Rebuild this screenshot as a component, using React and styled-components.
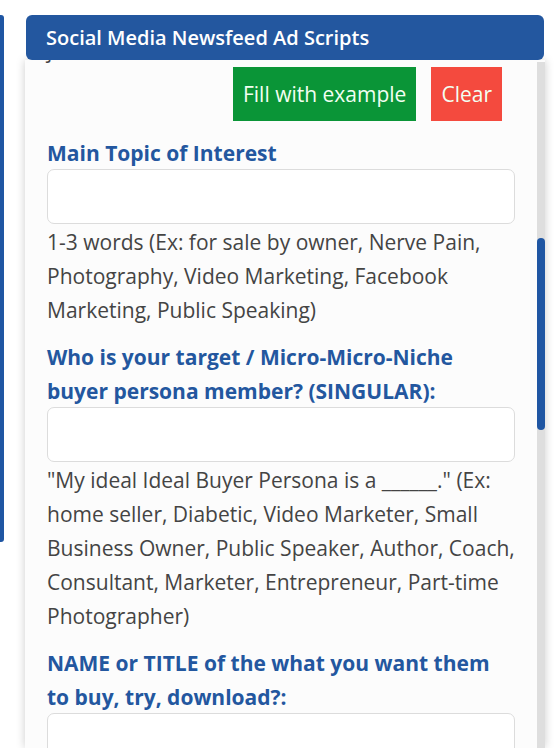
import React, { useLayoutEffect, useRef } from 'react';
import styled, { createGlobalStyle } from 'styled-components';

const GlobalStyle = createGlobalStyle`
  html, body { margin: 0; padding: 0; background: #ffffff; overflow: hidden; }
  * { box-sizing: border-box; }
`;

const Page = styled.div`
  display: flex;
  align-items: flex-start;
  height: 748px;
  font-family: "Open Sans", "Noto Sans", sans-serif;
`;

// the edge of the neighbouring panel, cut off by the window
const SideEdge = styled.div`
  width: 4px;
  height: 527px;
  margin-top: 15px;
  background: #1f56a3;
  border-radius: 0 3px 3px 0;
`;

const Panel = styled.section`
  position: relative;
  display: flex;
  flex-direction: column;
  width: 520px;
  height: 733px;
  margin-left: 21px;
  margin-top: 15px;
`;

const Header = styled.h2`
  flex: none;
  margin: 0 1px;
  height: 45px;
  display: flex;
  align-items: center;
  padding: 0 20px;
  background: #23579f;
  color: #fff;
  border-radius: 6px;
  font-size: 20px;
  font-weight: 600;
  position: relative;
  z-index: 1;
`;

const Body = styled.div`
  flex: 1;
  overflow: hidden;
  position: relative;
  background: #fcfcfc;
  box-shadow: 0 0 9px rgba(0, 0, 0, 0.2);
  padding: 0 30px 0 22px;
`;

const ScrollTrack = styled.div`
  position: absolute;
  right: 0;
  top: 47px;
  bottom: 0;
  width: 8px;
  background: #dedede;
  z-index: 2;
`;

const ScrollThumb = styled.div`
  width: 8px;
  height: 192px;
  margin-top: 176px;
  border-radius: 4px;
  background: #1f56a3;
`;

const Para = styled.p`
  margin: 0;
  font-size: 21px;
  line-height: 34px;
  color: #444;
`;

const ButtonRow = styled.div`
  display: flex;
  justify-content: flex-end;
  gap: 15px;
  padding-right: 13px;
`;

const Button = styled.button`
  height: 54px;
  padding: 0 10px;
  border: none;
  border-radius: 0;
  font-family: inherit;
  font-size: 21px;
  color: #f2fff2;
  background: ${p => (p.$tone === 'danger' ? '#f44a3e' : '#0a9537')};
  cursor: pointer;
`;

const Field = styled.div`
  display: flex;
  flex-direction: column;
  margin-top: ${p => (p.$first ? '15px' : '13px')};
`;

const Label = styled.label`
  font-size: 21px;
  font-weight: 700;
  line-height: 34px;
  color: #23579f;
`;

const Input = styled.input`
  height: 55px;
  width: 100%;
  margin-top: -1px;
  border: 1px solid #dcdcdc;
  border-radius: 7px;
  background: #fff;
  font-family: inherit;
  font-size: 18px;
  padding: 0 12px;
  outline: none;
`;

const Help = styled.div`
  font-size: 21px;
  line-height: 34px;
  color: #444;
  margin-top: 1px;
`;

const fields = [
  {
    label: 'Main Topic of Interest',
    help: '1-3 words (Ex: for sale by owner, Nerve Pain, Photography, Video Marketing, Facebook Marketing, Public Speaking)',
  },
  {
    label: 'Who is your target / Micro-Micro-Niche buyer persona member? (SINGULAR):',
    help: '"My ideal Ideal Buyer Persona is a ______." (Ex: home seller, Diabetic, Video Marketer, Small Business Owner, Public Speaker, Author, Coach, Consultant, Marketer, Entrepreneur, Part-time Photographer)',
  },
  {
    label: 'NAME or TITLE of the what you want them to buy, try, download?:',
    help: '(Ex: Free Report, Webinar, eBook, Online Course, Consultation)',
  },
];

export default function App() {
  const bodyRef = useRef(null);
  const rowRef = useRef(null);

  useLayoutEffect(() => {
    // the panel is scrolled so the buttons sit just under the header
    bodyRef.current.scrollTop = rowRef.current.offsetTop - 7;
  }, []);

  return (
    <>
      <GlobalStyle />
      <Page>
        <SideEdge />
        <Panel>
          <Header>Social Media Newsfeed Ad Scripts</Header>
          <Body ref={bodyRef}>
            <Para>just a moment.</Para>
            <ButtonRow ref={rowRef}>
              <Button type="button">Fill with example</Button>
              <Button type="button" $tone="danger">Clear</Button>
            </ButtonRow>
            {fields.map((f, i) => (
              <Field key={i} $first={i === 0}>
                <Label>{f.label}</Label>
                <Input type="text" />
                <Help>{f.help}</Help>
              </Field>
            ))}
          </Body>
          <ScrollTrack>
            <ScrollThumb />
          </ScrollTrack>
        </Panel>
      </Page>
    </>
  );
}
